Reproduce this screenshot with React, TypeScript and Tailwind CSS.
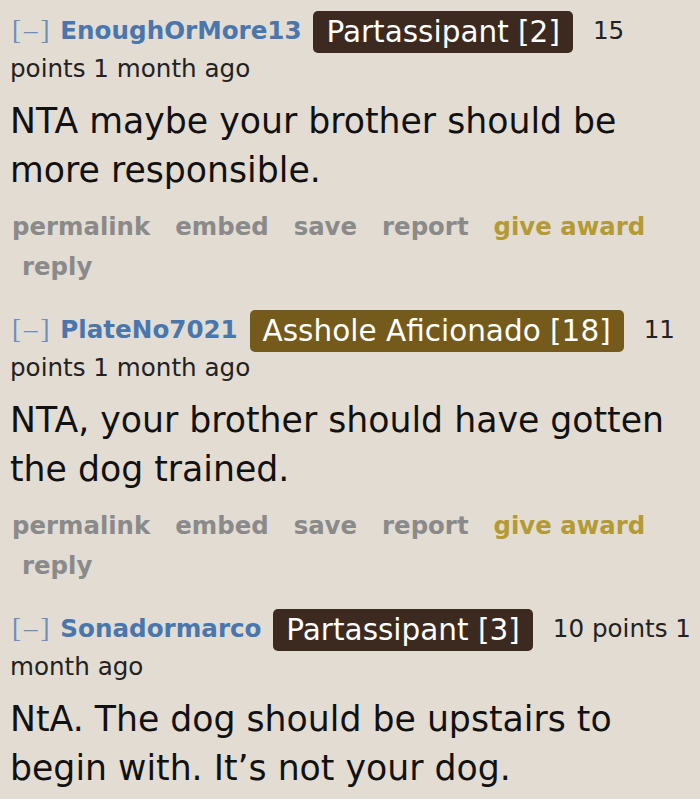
import React from 'react'

interface CommentProps {
  author: string
  flair: string
  flairClass: string
  points: string
  body: string[]
  actions?: boolean
}

const Comment: React.FC<CommentProps> = ({ author, flair, flairClass, points, body, actions = true }) => (
  <div className="pl-[10px] pr-[6px]">
    <div className="text-[24.6px] leading-[38px] text-[#222] pt-[11px]">
      <span className="text-[#6b8fbf] ml-[2px] tracking-[3px] font-['Liberation_Serif',serif] text-[27px]">[–]</span>{' '}
      <span className="font-bold text-[#4876ad]">{author}</span>{' '}
      <span className={`inline-block align-middle my-[-3px] ml-[4px] mr-[20px] px-[13px] rounded-[5px] text-white text-[29.5px] leading-[42px] ${flairClass}`}>
        {flair}
      </span>
      {points}
    </div>
    <div className="text-[34.7px] leading-[49px] text-[#111] mt-[9px]">
      {body.map((line) => <div key={line} className="whitespace-nowrap">{line}</div>)}
    </div>
    {actions && (
      <div className="text-[24.4px] leading-[40px] font-bold text-[#8a8a8a] mt-[12px] pl-[2px] pb-[12px]">
        <div className="flex gap-[25px]">
          <span>permalink</span>
          <span>embed</span>
          <span>save</span>
          <span>report</span>
          <span className="text-[#b49a34]">give award</span>
        </div>
        <div className="pl-[10px]">reply</div>
      </div>
    )}
  </div>
)

export default function App() {
  return (
    <div className="w-[700px] h-[799px] overflow-hidden bg-[#e2dcd3] font-['DejaVu_Sans',sans-serif]">
      <Comment
        author="EnoughOrMore13"
        flair="Partassipant [2]"
        flairClass="bg-[#3c2a21]"
        points="15 points 1 month ago"
        body={['NTA maybe your brother should be', 'more responsible.']}
      />
      <Comment
        author="PlateNo7021"
        flair="Asshole Aficionado [18]"
        flairClass="bg-[#745a1b]"
        points="11 points 1 month ago"
        body={['NTA, your brother should have gotten', 'the dog trained.']}
      />
      <Comment
        author="Sonadormarco"
        flair="Partassipant [3]"
        flairClass="bg-[#3c2a21]"
        points="10 points 1 month ago"
        body={['NtA. The dog should be upstairs to', 'begin with. It’s not your dog.']}
        actions={false}
      />
    </div>
  )
}
